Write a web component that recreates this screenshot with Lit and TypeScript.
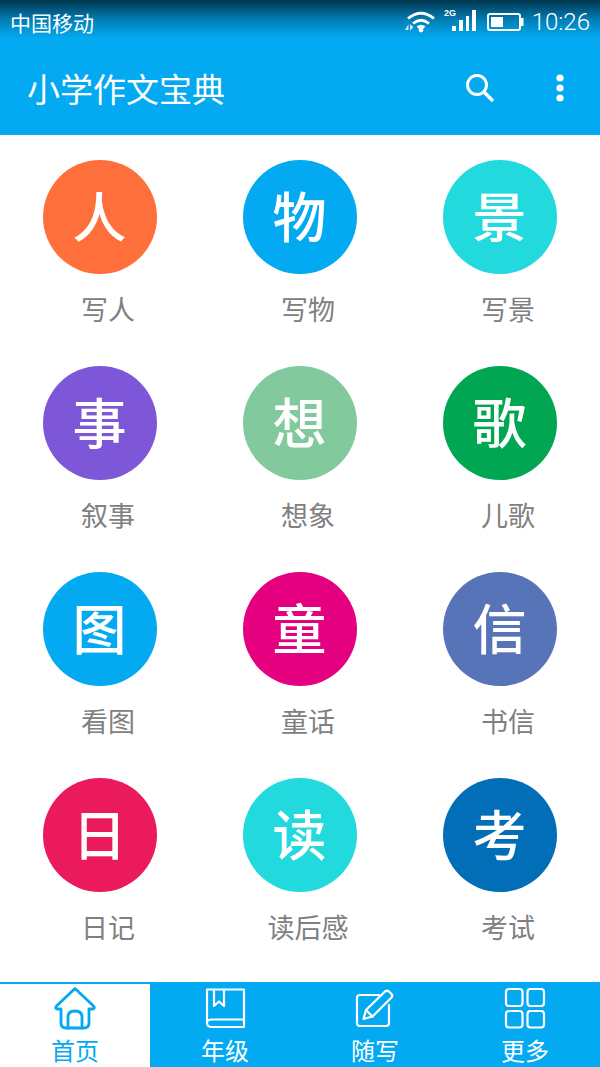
import { LitElement, html, css, svg } from 'lit';
import { customElement } from 'lit/decorators.js';

const ITEMS = [
  { glyph: '人', label: '写人', color: '#ff6f3c' },
  { glyph: '物', label: '写物', color: '#03a9f1' },
  { glyph: '景', label: '写景', color: '#22d9de' },
  { glyph: '事', label: '叙事', color: '#7e57d9' },
  { glyph: '想', label: '想象', color: '#82c99d' },
  { glyph: '歌', label: '儿歌', color: '#00a651' },
  { glyph: '图', label: '看图', color: '#03a9f1' },
  { glyph: '童', label: '童话', color: '#e4007f' },
  { glyph: '信', label: '书信', color: '#5874b8' },
  { glyph: '日', label: '日记', color: '#eb1a5d' },
  { glyph: '读', label: '读后感', color: '#22d9de' },
  { glyph: '考', label: '考试', color: '#036eb8' },
];

const homeIcon = svg`<path stroke-width="2.8" d="M21 2.5 L2.5 20 Q0.5 22.5 3.5 23 L7 23 V37 Q7 42 12 42 H30 Q35 42 35 37 V23 L38.5 23 Q41.5 22.5 39.5 20 Z" /><path stroke-width="2.8" d="M14 42 V31 Q14 25 21 25 Q28 25 28 31 V42" />`;
const bookIcon = svg`<path d="M3 37 V3.5 H40 V41 H8 Q3 41 3 37 Q3 33.5 8 33.5 H40" /><path d="M10 3.5 V20 L15 15.5 L20 20 V3.5" />`;
const editIcon = svg`<path d="M25 9 H6 Q3 9 3 12 V37 Q3 40 6 40 H32 Q35 40 35 37 V19" /><path d="M9.5 33 L12 24 L31 5.5 Q33 4 35 5.5 L37.5 8 Q39 10 37.5 11.5 L18.5 30.5 Z" /><path d="M12 24 L18.5 30.5" />`;
const gridIcon = svg`<rect x="2" y="3" width="16.5" height="17" rx="3" /><rect x="23.5" y="3" width="16.5" height="17" rx="3" /><rect x="2" y="25" width="16.5" height="16.5" rx="3" /><rect x="23.5" y="25" width="16.5" height="16.5" rx="3" />`;

const TABS = [
  { label: '首页', icon: homeIcon, active: true },
  { label: '年级', icon: bookIcon, active: false },
  { label: '随写', icon: editIcon, active: false },
  { label: '更多', icon: gridIcon, active: false },
];

@customElement('app-root')
export class AppRoot extends LitElement {
  static styles = css`
    :host {
      display: flex;
      flex-direction: column;
      width: 600px;
      height: 1067px;
      overflow: hidden;
      background: #ffffff;
      font-family: 'Noto Sans CJK SC', 'Liberation Sans', sans-serif;
    }

    .top {
      height: 135px;
      flex: none;
      color: #ffffff;
      background: linear-gradient(#01354d 0, #027fb6 20px, #03a9f1 38px);
    }

    .status {
      height: 44px;
      display: flex;
      align-items: center;
      padding: 0 10px;
    }

    .status .carrier {
      flex: 1;
      font-size: 21px;
    }

    .status svg {
      display: block;
      flex: none;
    }

    .signal {
      margin-left: 7px;
    }

    .battery {
      margin-left: 11px;
    }

    .status .clock {
      font-family: 'Roboto', sans-serif;
      font-weight: 300;
      font-size: 24px;
      margin-left: 8px;
    }

    .appbar {
      display: flex;
      align-items: center;
      height: 91px;
      padding: 0 36px 3px 27px;
      box-sizing: border-box;
    }

    .title {
      flex: 1;
      font-size: 33px;
      line-height: 44px;
    }

    .appbar svg {
      display: block;
    }

    .menu {
      margin-left: 60px;
    }

    .grid {
      flex: 1;
      min-height: 0;
      display: grid;
      grid-template-columns: repeat(3, 200px);
      grid-auto-rows: 206px;
      padding-top: 25px;
    }

    .cell {
      display: flex;
      flex-direction: column;
      align-items: center;
    }

    .circle {
      width: 114px;
      height: 114px;
      padding: 0 1px 5px 0;
      box-sizing: border-box;
      border-radius: 50%;
      display: flex;
      align-items: center;
      justify-content: center;
      color: #ffffff;
      font-size: 54px;
      line-height: 1;
      font-weight: 500;
    }

    .label {
      margin: 17px 0 0 16px;
      font-size: 27px;
      line-height: 36px;
      color: #808080;
    }

    .tabs {
      flex: none;
      height: 85px;
      display: grid;
      grid-template-columns: repeat(4, 150px);
      background: #03a9f1;
    }

    .tab {
      display: flex;
      flex-direction: column;
      align-items: center;
      color: #ffffff;
      padding-top: 4px;
    }

    .tab.active {
      background: #ffffff;
      color: #03a9f1;
      border-top: 2px solid #03a9f1;
      padding-top: 2px;
    }

    .tab svg {
      display: block;
      flex: none;
      fill: none;
      stroke: currentColor;
      stroke-width: 2.2;
      stroke-linejoin: round;
      stroke-linecap: round;
    }

    .tab span {
      font-size: 24px;
      line-height: 30px;
      margin-top: 5px;
    }
  `;

  render() {
    return html`
      <div class="top">
        <div class="status">
          <span class="carrier">中国移动</span>
          <svg width="32" height="22" viewBox="0 0 32 22" fill="none" stroke="#fff" stroke-width="2.8">
            <path d="M3 7.5 Q16 -3 29 7.5" />
            <path d="M8 12.5 Q16 6 24 12.5" />
            <path d="M12.5 16.5 Q16 14 19.5 16.5" />
            <circle cx="16" cy="19" r="2.4" fill="#fff" stroke="none" />
            <path d="M3.5 13 L0 19 H3.5 Z" fill="#fff" stroke="none" opacity="0.8" />
            <path d="M5 13 V20 L8.5 16 Z" fill="#fff" stroke="none" opacity="0.8" />
          </svg>
          <svg class="signal" width="32" height="28" viewBox="0 0 32 28" fill="#fff">
            <text x="0" y="7.5" font-size="9" font-weight="700" font-family="Liberation Sans">2G</text>
            <rect x="8" y="18" width="4" height="5" />
            <rect x="15" y="12" width="4" height="11" />
            <rect x="22" y="8" width="3" height="15" />
            <rect x="28" y="2" width="4" height="21" />
          </svg>
          <svg class="battery" width="37" height="20" viewBox="0 0 37 20">
            <rect x="1" y="2" width="32" height="16" rx="2" fill="none" stroke="#fff" stroke-width="2" />
            <rect x="4" y="5" width="12" height="10" fill="#fff" />
            <rect x="34" y="6" width="2.5" height="8" fill="#fff" />
          </svg>
          <span class="clock">10:26</span>
        </div>
        <div class="appbar">
          <span class="title">小学作文宝典</span>
          <svg width="32" height="32" viewBox="0 0 32 32" fill="none" stroke="#fff">
            <circle cx="13" cy="13" r="9.5" stroke-width="3" />
            <path d="M20 20 L29 29" stroke-width="3.6" />
          </svg>
          <svg class="menu" width="8" height="28" viewBox="0 0 8 28" fill="#fff">
            <circle cx="4" cy="4" r="3.6" />
            <circle cx="4" cy="14" r="3.6" />
            <circle cx="4" cy="24" r="3.6" />
          </svg>
        </div>
      </div>
      <div class="grid">
        ${ITEMS.map(
          (item) => html`
            <div class="cell">
              <div class="circle" style="background:${item.color}">${item.glyph}</div>
              <div class="label">${item.label}</div>
            </div>
          `
        )}
      </div>
      <div class="tabs">
        ${TABS.map(
          (tab) => html`
            <div class="tab ${tab.active ? 'active' : ''}">
              <svg width="42" height="44" viewBox="0 0 42 44">${tab.icon}</svg>
              <span>${tab.label}</span>
            </div>
          `
        )}
      </div>
    `;
  }
}
